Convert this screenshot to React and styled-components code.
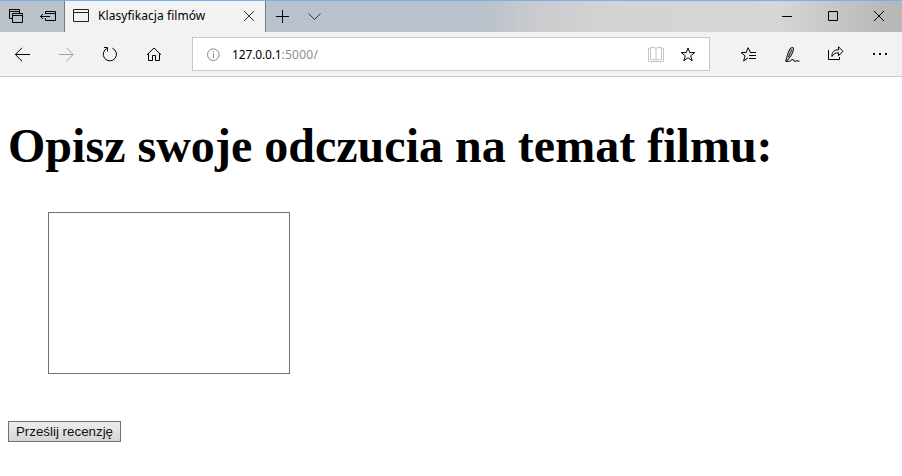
import React from 'react';
import styled, { createGlobalStyle } from 'styled-components';

const GlobalStyle = createGlobalStyle`
  * { box-sizing: border-box; }
  body { margin: 0; background: #fff; overflow: hidden; }
`;

const ui = '"Noto Sans", "Open Sans", sans-serif';

const Window = styled.div`
  display: flex;
  flex-direction: column;
  width: 902px;
  height: 476px;
  background: #fff;
`;

const TitleBar = styled.header`
  display: flex;
  height: 32px;
  border-top: 1px solid #6cb4f4;
  background: linear-gradient(90deg, #bac1cb 0, #bac2cd 400px, #bcc2cb 490px, #c8cacd 530px, #d3d3d3 600px, #d6d6d6 780px, #b9b9b9 880px, #b7b7b7 902px);
`;

const Cell = styled.button`
  display: block;
  flex: none;
  width: ${(p) => p.$w}px;
  height: ${(p) => p.$h}px;
  padding: 0;
  border: 0;
  background: none;
`;

const Glyph = styled.svg`
  display: block;
  fill: none;
  stroke: ${(p) => p.$color || '#000'};
  stroke-width: ${(p) => p.$weight || 1};
`;

const Tab = styled.div`
  display: flex;
  flex: none;
  width: 202px;
  height: 31px;
  background: #f2f2f2;
  border-left: 1px solid #737a86;
  border-right: 1px solid #737a86;
`;

const TabTitle = styled.span`
  flex: 1;
  font: 12px/30px ${ui};
  letter-spacing: 0.06px;
  color: #000;
  white-space: nowrap;
`;

const Spacer = styled.div`
  flex: 1;
`;

const Toolbar = styled.nav`
  display: flex;
  flex: none;
  height: 45px;
  background: #f2f2f2;
  border-bottom: 1px solid #cacaca;
`;

const AddressBar = styled.div`
  display: flex;
  flex: none;
  width: 518px;
  height: 34px;
  margin: 5px 16px 0;
  background: #fff;
  border: 1px solid #c9c9c9;
`;

const Url = styled.span`
  flex: 1;
  font: 12px/34px ${ui};
  letter-spacing: -0.15px;
  color: #000;
`;

const UrlRest = styled.span`
  color: #8d8d8d;
  letter-spacing: 0.25px;
`;

const Page = styled.main`
  display: flex;
  flex-direction: column;
  align-items: flex-start;
  padding: 41px 8px 0;
`;

const Heading = styled.h1`
  margin: 0;
  font: bold 48px/55px "Liberation Serif", "Times New Roman", serif;
  letter-spacing: 0.02px;
  color: #000;
  white-space: nowrap;
`;

const Review = styled.textarea`
  width: 242px;
  height: 162px;
  margin: 39px 0 0 40px;
  padding: 2px;
  border: 1px solid #707070;
  background: #fff;
  resize: none;
  outline: none;
`;

const Submit = styled.button`
  width: 113px;
  height: 21px;
  margin-top: 47px;
  padding: 0;
  border: 1px solid #707070;
  background: linear-gradient(#ededed, #d5d5d5);
  font: 13.333px/19px "Liberation Sans", Arial, sans-serif;
  color: #111;
  white-space: nowrap;
`;

/* Each icon's view box starts at (x, y), its cell's place in the window. */
function IconCell({ x, y = 32, w = 44, h = 44, color, weight, label, children }) {
  return (
    <Cell $w={w} $h={h} aria-label={label}>
      <Glyph width={w} height={h} viewBox={`${x} ${y} ${w} ${h}`} $color={color} $weight={weight}>
        {children}
      </Glyph>
    </Cell>
  );
}

export default function App() {
  return (
    <>
      <GlobalStyle />
      <Window>
        <TitleBar>
          <IconCell x={0} y={1} w={32} h={31} label="Karty">
            <path d="M12.5 18.5H9.5V9.5H19.5V13.5M9.5 11.5H19.5M12.5 13.5H22.5V22.5H12.5ZM12.5 15.5H22.5" />
          </IconCell>
          <IconCell x={32} y={1} w={32} h={31} label="Odłóż karty">
            <path d="M45.5 14V11.5H55.5V20.5H45.5V18M45.5 13.5H55.5M40.5 16.5H50M43 14L40.5 16.5L43 19" />
          </IconCell>
          <Tab>
            <IconCell x={65} y={1} w={33} h={31} color="#222" label="Strona">
              <path d="M73.5 9.5H88.5V21.5H73.5ZM73.5 12.5H88.5" />
            </IconCell>
            <TabTitle>Klasyfikacja filmów</TabTitle>
            <IconCell x={233} y={1} w={32} h={31} color="#333" label="Zamknij kartę">
              <path d="M244 11L254 21M254 11L244 21" />
            </IconCell>
          </Tab>
          <IconCell x={266} y={1} w={33} h={31} label="Nowa karta">
            <path d="M276 16.5H289M282.5 10V23" />
          </IconCell>
          <IconCell x={299} y={1} w={32} h={31} color="#333" label="Podgląd kart">
            <path d="M308.5 13.5L314.5 19.5L320.5 13.5" />
          </IconCell>
          <Spacer />
          <IconCell x={764} y={1} w={46} h={31} label="Minimalizuj">
            <path d="M782 16.5H792" />
          </IconCell>
          <IconCell x={810} y={1} w={46} h={31} label="Maksymalizuj">
            <path d="M828.5 11.5H837.5V20.5H828.5Z" />
          </IconCell>
          <IconCell x={856} y={1} w={46} h={31} label="Zamknij">
            <path d="M874 11L884 21M884 11L874 21" />
          </IconCell>
        </TitleBar>

        <Toolbar>
          <IconCell x={0} label="Wstecz">
            <path d="M30 54.5H15.5M22 47.8L15.3 54.5L22 61.2" />
          </IconCell>
          <IconCell x={44} color="#a2a2a2" label="Dalej">
            <path d="M59 54.5H73M66.5 47.8L73.2 54.5L66.5 61.2" />
          </IconCell>
          <IconCell x={88} label="Odśwież">
            <path d="M112.4 48.2A6.6 6.6 0 1 1 107.3 48.2M104 47.5H107.5V51.5" />
          </IconCell>
          <IconCell x={132} label="Strona główna">
            <path d="M147 54.8L154 48L161 54.8M148.5 53.5V60.5H152.5V55.5H155.5V60.5H159.5V53.5" />
          </IconCell>
          <AddressBar>
            <IconCell x={193} y={38} w={39} h={32} color="#858585" label="Informacje o witrynie">
              <circle cx="213.3" cy="54.7" r="5.8" />
              <path d="M213.4 53.5V58M213.4 51V52.3" />
            </IconCell>
            <Url>127.0.0.1<UrlRest>:5000/</UrlRest></Url>
            <IconCell x={640} y={38} w={32} h={32} color="#c4c4c4" label="Widok do czytania">
              <path d="M650 48.5H648.5V61.5H663.5V48.5H662M656 49V60M650.5 59.5V47.5H654Q656 47.7 656 49Q656 47.7 658 47.5H661.5V59.5H658Q656 59.7 656 60.5Q656 59.7 654 59.5Z" />
            </IconCell>
            <IconCell x={672} y={38} w={37} h={32} label="Dodaj do ulubionych">
              <path d="M688 47.9L689.7 52.6H694.7L690.7 55.8L692.2 60.8L688 57.8L683.8 60.8L685.3 55.8L681.3 52.6H686.3Z" />
            </IconCell>
          </AddressBar>
          <IconCell x={726} label="Centrum">
            <path d="M750.5 52.5L748 47.7L746.2 52.5H741L745.1 55.8L743.6 61L748 57.9" />
            <path d="M750 52.5H756M749 55.5H756M749 58.5H756" />
          </IconCell>
          <IconCell x={770} color="#222" weight={1.1} label="Notatki">
            <path d="M785.6 61.5L787.2 56C788.2 52 790.5 47.4 792.5 47.5C794.6 47.8 793 52 791 55.5C789.5 58 787.8 60.3 785.6 61.5M788.3 57L792 49.5M786 61.5H789C790.5 61.3 791.5 59.5 792.7 59.5C794 59.5 794 61.5 795.2 61.5C796.2 61.5 796.5 60.4 797.3 60.5C798 60.8 798 61.7 799.5 61" />
          </IconCell>
          <IconCell x={814} label="Udostępnij">
            <path d="M828.5 50V59.5H839.5V57" />
            <path d="M832 56.5C831.5 52 834.5 49.8 838.5 49.8V46.8L843 51.3L838.5 55.7V52.8C835.5 52.8 833.5 53.6 832 56.5Z" />
          </IconCell>
          <IconCell x={858} label="Więcej">
            <path d="M873 54H875M879 54H881M885 54H887" strokeWidth="2" />
          </IconCell>
        </Toolbar>

        <Page>
          <Heading>Opisz swoje odczucia na temat filmu:</Heading>
          <Review aria-label="Recenzja" />
          <Submit type="button">Prześlij recenzję</Submit>
        </Page>
      </Window>
    </>
  );
}
